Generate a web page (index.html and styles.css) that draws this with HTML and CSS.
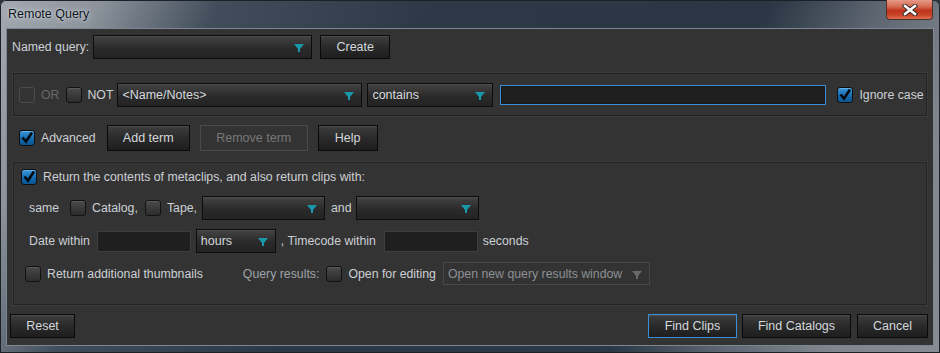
FILE: index.html
```html
<!DOCTYPE html>
<html lang="en">
<head>
    <meta charset="UTF-8">
    <title>Remote Query</title>
    <link rel="stylesheet" href="styles.css">
</head>
<body>
<div class="window">
    <div class="titlebar">
        <span class="title">Remote Query</span>
        <span class="close">
            <svg width="16" height="12" viewBox="0 0 16 12">
                <path d="M3 2 L13 10 M13 2 L3 10" stroke="#3a2a28" stroke-width="4.5" stroke-linecap="square"/>
                <path d="M3 2 L13 10 M13 2 L3 10" stroke="#ffffff" stroke-width="2.5" stroke-linecap="square"/>
            </svg>
        </span>
    </div>

    <div class="client">
        <!-- named query -->
        <div class="row named">
            <span class="lbl">Named query:</span>
            <div class="combo w-named ml4"><span></span><svg class="arrow" width="10" height="8" viewBox="0 0 10 8"><path d="M0 0 H10 L6 5 V8 H4 V5 Z" fill="#1a98aa"/></svg></div>
            <button class="btn w-create ml8">Create</button>
        </div>

        <!-- search term -->
        <div class="group term">
            <span class="cb disabled"></span>
            <span class="lbl dim ml6">OR</span>
            <span class="cb ml7"></span>
            <span class="lbl ml5">NOT</span>
            <div class="combo w-field ml4"><span>&lt;Name/Notes&gt;</span><svg class="arrow" width="10" height="8" viewBox="0 0 10 8"><path d="M0 0 H10 L6 5 V8 H4 V5 Z" fill="#1a98aa"/></svg></div>
            <div class="combo w-op ml5"><span>contains</span><svg class="arrow" width="10" height="8" viewBox="0 0 10 8"><path d="M0 0 H10 L6 5 V8 H4 V5 Z" fill="#1a98aa"/></svg></div>
            <div class="textbox focus w-value ml7"></div>
            <span class="cb checked ml11"><svg width="14" height="14" viewBox="0 0 14 14"><path d="M2.5 6.5 L6 10.5 L12 1.5" stroke="#050a10" stroke-width="2.6" fill="none"/></svg></span>
            <span class="lbl ml6">Ignore case</span>
        </div>

        <!-- advanced -->
        <div class="row adv">
            <span class="cb checked"><svg width="14" height="14" viewBox="0 0 14 14"><path d="M2.5 6.5 L6 10.5 L12 1.5" stroke="#050a10" stroke-width="2.6" fill="none"/></svg></span>
            <span class="lbl ml6">Advanced</span>
            <button class="btn w-add ml11">Add term</button>
            <button class="btn disabled w-remove ml10">Remove term</button>
            <button class="btn w-help ml10">Help</button>
        </div>

        <div class="group options">
            <div class="orow first">
                <span class="cb checked"><svg width="14" height="14" viewBox="0 0 14 14"><path d="M2.5 6.5 L6 10.5 L12 1.5" stroke="#050a10" stroke-width="2.6" fill="none"/></svg></span>
                <span class="lbl ml6">Return the contents of metaclips, and also return clips with:</span>
            </div>
            <div class="orow same">
                <span class="lbl">same</span>
                <span class="cb ml11"></span>
                <span class="lbl ml6">Catalog,</span>
                <span class="cb ml7"></span>
                <span class="lbl ml6">Tape,</span>
                <div class="combo w-tape ml5"><span></span><svg class="arrow" width="10" height="8" viewBox="0 0 10 8"><path d="M0 0 H10 L6 5 V8 H4 V5 Z" fill="#1a98aa"/></svg></div>
                <span class="lbl ml6">and</span>
                <div class="combo w-tape ml4"><span></span><svg class="arrow" width="10" height="8" viewBox="0 0 10 8"><path d="M0 0 H10 L6 5 V8 H4 V5 Z" fill="#1a98aa"/></svg></div>
            </div>
            <div class="orow date">
                <span class="lbl">Date within</span>
                <div class="textbox w-date ml7"></div>
                <div class="combo w-unit ml5"><span>hours</span><svg class="arrow" width="10" height="8" viewBox="0 0 10 8"><path d="M0 0 H10 L6 5 V8 H4 V5 Z" fill="#1a98aa"/></svg></div>
                <span class="lbl ml5">, Timecode within</span>
                <div class="textbox w-date ml8"></div>
                <span class="lbl ml5">seconds</span>
            </div>
            <div class="orow thumbs">
                <span class="cb"></span>
                <span class="lbl ml6">Return additional thumbnails</span>
                <span class="lbl dim2 ml40">Query results:</span>
                <span class="cb ml7"></span>
                <span class="lbl ml6">Open for editing</span>
                <div class="combo disabled w-results ml7"><span>Open new query results window</span><svg class="arrow" width="10" height="8" viewBox="0 0 10 8"><path d="M0 0 H10 L6 5 V8 H4 V5 Z" fill="#6a6a6a"/></svg></div>
            </div>
        </div>

        <div class="row footer">
            <button class="btn w-reset">Reset</button>
            <span class="spacer"></span>
            <button class="btn default w-find">Find Clips</button>
            <button class="btn w-catalogs ml5">Find Catalogs</button>
            <button class="btn w-cancel ml6">Cancel</button>
        </div>
    </div>
</div>
</body>
</html>
```

FILE: styles.css
```css
* {
    box-sizing: border-box;
}

body {
    margin: 0;
    background: #2a323c;
    font-family: 'Liberation Sans', Arial, sans-serif;
    font-size: 12.3px;
}

.window {
    width: 940px;
    height: 353px;
    padding: 0 6px 7px 6px;
    border-radius: 6px 6px 0 0;
    background:
        linear-gradient(115deg, #a3a9b0 0%, #8c939b 9%, #414d5b 20%, #2c3846 40%, #2b3745 70%, #5d6671 80%, #7f868e 90%, #868c93 100%);
    box-shadow: inset 0 0 0 1px #1c2128;
}

.titlebar {
    height: 28px;
    position: relative;
}

.title {
    position: absolute;
    left: 2px;
    top: 7px;
    color: #0c1218;
    font-size: 12.5px;
    text-shadow: 0 0 6px rgba(230, 235, 240, 0.8), 0 0 2px rgba(230, 235, 240, 0.8);
}

.close {
    position: absolute;
    right: 1px;
    top: 0;
    width: 47px;
    height: 20px;
    border: 1px solid #4d302c;
    border-top: none;
    border-radius: 0 0 4px 4px;
    background: linear-gradient(#e69a88 0%, #d56a52 35%, #c0331c 55%, #c94528 80%, #dd7050 100%);
    display: flex;
    align-items: center;
    justify-content: center;
}

.client {
    height: 318px;
    border: 1px solid #7e8893;
    background: #333333;
    color: #ccd0d4;
}

.row {
    display: flex;
    align-items: center;
}

.named {
    height: 24px;
    margin-top: 6px;
    padding-left: 5px;
}

.group {
    margin: 0 6px;
    border: 1px solid #242424;
    box-shadow: 0 0 0 1px #3b3b3b;
}

.term {
    height: 43px;
    margin-top: 14px;
    display: flex;
    align-items: center;
    padding-left: 5px;
}

.adv {
    height: 26px;
    margin-top: 9px;
    padding-left: 12px;
}

.options {
    height: 143px;
    margin-top: 11px;
    padding-top: 3px;
}

.orow {
    display: flex;
    align-items: center;
}

.orow.first {
    height: 22px;
    padding-left: 7px;
}

.orow.same {
    height: 24px;
    margin-top: 8px;
    padding-left: 15px;
}

.orow.date {
    height: 24px;
    margin-top: 9px;
    padding-left: 15px;
}

.orow.thumbs {
    height: 23px;
    margin-top: 9px;
    padding-left: 11px;
}

.footer {
    height: 24px;
    margin-top: 9px;
    padding: 0 5px 0 3px;
}

.spacer {
    flex: 1;
}

.lbl {
    white-space: nowrap;
    color: #ccd0d4;
}

.dim {
    color: #686868;
}

.dim2 {
    color: #9ea3a8;
}

/* checkboxes */
.cb {
    flex: none;
    width: 16px;
    height: 16px;
    border: 1px solid #111;
    border-radius: 3px;
    background: linear-gradient(#4a4a4a, #2c2c2c);
    box-shadow: inset 0 1px 0 #5a5a5a;
    display: flex;
    align-items: center;
    justify-content: center;
}

.cb.disabled {
    border-color: #4b4b4b;
    background: #333;
    box-shadow: none;
}

.cb.checked {
    background: linear-gradient(#3a96d8, #1268ac 60%, #0d5590);
    border-color: #0b0f14;
    box-shadow: inset 0 1px 0 #5fb0e8;
}

/* combo boxes */
.combo {
    flex: none;
    height: 24px;
    border: 1px solid #0c0c0c;
    background: linear-gradient(#444444, #2a2a2a 55%, #232323);
    box-shadow: inset 0 1px 0 #4c4c4c;
    display: flex;
    align-items: center;
    padding: 0 7px 0 4px;
    color: #d4d8dc;
    font-size: 12.5px;
}

.combo span {
    flex: 1;
    white-space: nowrap;
    overflow: hidden;
}

.combo .arrow {
    flex: none;
    margin-top: 2px;
}

.combo.disabled {
    border-color: #474747;
    background: #333;
    box-shadow: none;
    color: #8c9094;
    height: 23px;
    font-size: 12.3px;
}

.textbox {
    flex: none;
    height: 21px;
    background: #1f1f1f;
    border: 1px solid #3e3e3e;
}

.textbox.focus {
    height: 20px;
    border: 1px solid #3a8ed6;
    box-shadow: inset 0 0 0 1px #1a1a1a;
}

/* buttons */
.btn {
    flex: none;
    height: 24px;
    border: 1px solid #0a0a0a;
    background: linear-gradient(#3e3e3e, #2a2a2a 50%, #1e1e1e);
    box-shadow: inset 0 1px 0 #4a4a4a;
    color: #d4d8dc;
    font-family: 'Liberation Sans', Arial, sans-serif;
    font-size: 12.5px;
    padding: 0;
    text-align: center;
}

.adv .btn {
    height: 26px;
}

.btn.disabled {
    border-color: #4a4a4a;
    background: #333;
    box-shadow: none;
    color: #777;
}

.btn.default {
    border-color: #3a8ed6;
}

/* widths */
.w-named { width: 219px; }
.w-create { width: 70px; }
.w-field { width: 245px; }
.w-op { width: 126px; }
.w-value { width: 326px; }
.w-add { width: 83px; }
.w-remove { width: 108px; }
.w-help { width: 60px; }
.w-tape { width: 123px; }
.w-date { width: 94px; }
.w-unit { width: 80px; }
.w-results { width: 207px; }
.w-reset { width: 65px; }
.w-find { width: 89px; }
.w-catalogs { width: 109px; }
.w-cancel { width: 71px; }

/* spacing helpers */
.ml4 { margin-left: 4px; }
.ml5 { margin-left: 5px; }
.ml6 { margin-left: 6px; }
.ml7 { margin-left: 7px; }
.ml8 { margin-left: 8px; }
.ml10 { margin-left: 10px; }
.ml11 { margin-left: 11px; }
.ml40 { margin-left: 40px; }
```
